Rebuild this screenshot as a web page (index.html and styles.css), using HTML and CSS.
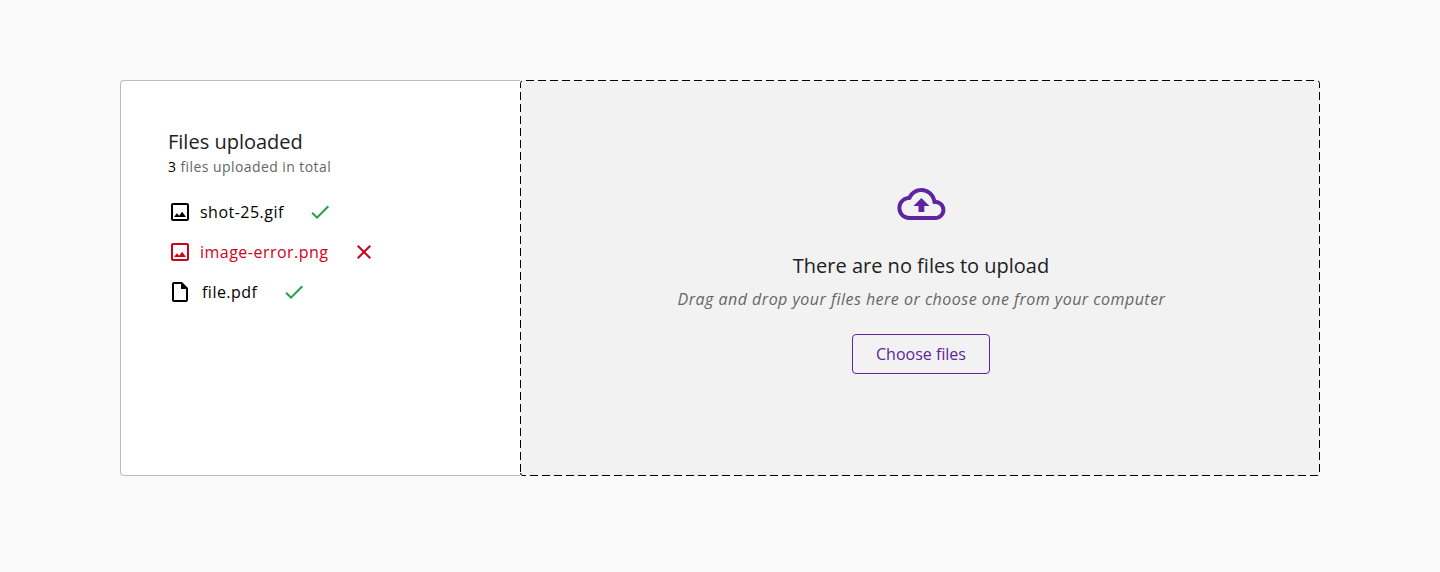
FILE: index.html
```html
<!DOCTYPE html>
<html lang="en">
<head>
<meta charset="utf-8">
<title>File upload</title>
<link rel="stylesheet" href="styles.css">
</head>
<body>
<main class="uploader">
  <section class="uploaded">
    <h2 class="title">Files uploaded</h2>
    <p class="summary"><span class="count">3</span> files uploaded in total</p>
    <ul class="files">
      <li class="file">
        <svg class="icon" viewBox="0 0 24 24"><path d="M19 5v14H5V5h14m0-2H5c-1.100 0-2 .9-2 2v14c0 1.100.9 2 2 2h14c1.100 0 2-.9 2-2V5c0-1.100-.9-2-2-2zm-4.860 8.860l-3 3.870L9 13.140 6 17h12l-3.860-5.140z"/></svg>
        <span class="name">shot-25.gif</span>
        <svg class="icon ok" viewBox="0 0 24 24"><path d="M9 16.170L4.830 12l-1.420 1.410L9 19 21 7l-1.410-1.410z"/></svg>
      </li>
      <li class="file failed">
        <svg class="icon" viewBox="0 0 24 24"><path d="M19 5v14H5V5h14m0-2H5c-1.100 0-2 .9-2 2v14c0 1.100.9 2 2 2h14c1.100 0 2-.9 2-2V5c0-1.100-.9-2-2-2zm-4.860 8.860l-3 3.870L9 13.140 6 17h12l-3.860-5.140z"/></svg>
        <span class="name">image-error.png</span>
        <svg class="icon" viewBox="0 0 24 24"><path d="M19 6.410L17.590 5 12 10.590 6.410 5 5 6.410 10.590 12 5 17.590 6.410 19 12 13.410 17.590 19 19 17.590 13.410 12z"/></svg>
      </li>
      <li class="file document">
        <svg class="icon" viewBox="0 0 24 24"><path d="M14 2H6c-1.100 0-2 .9-2 2v16c0 1.100.9 2 2 2h12c1.100 0 2-.9 2-2V8l-6-6zM6 20V4h7v5h5v11H6z"/></svg>
        <span class="name">file.pdf</span>
        <svg class="icon ok" viewBox="0 0 24 24"><path d="M9 16.170L4.830 12l-1.420 1.410L9 19 21 7l-1.410-1.410z"/></svg>
      </li>
    </ul>
  </section>
  <section class="dropzone">
    <svg class="outline" viewBox="0 0 800 396">
      <path class="dashes" d="M6 .5H798M799.500 12V392M.5 12V392M10 395.500H798"/>
      <path d="M.5 8V3.500Q.5 1.500 2 1M799.500 8V3.500Q799.500 1.500 798 1M.5 393Q.5 395.500 3 395.500H6"/>
    </svg>
    <svg class="cloud" viewBox="-.2 0 24 24"><path d="M19.350 10.040C18.670 6.590 15.640 4 12 4 9.110 4 6.600 5.640 5.350 8.040 2.340 8.360 0 10.910 0 14c0 3.310 2.690 6 6 6h13c2.760 0 5-2.240 5-5 0-2.640-2.050-4.780-4.650-4.960zM19 18H6c-2.210 0-4-1.790-4-4 0-2.050 1.530-3.760 3.560-3.970l1.070-.11.500-.95C8.080 7.140 9.940 6 12 6c2.620 0 4.880 1.860 5.390 4.430l.3 1.500 1.530.11c1.560.1 2.780 1.410 2.780 2.960 0 1.650-1.350 3-3 3zM8 13h2.550v3h2.900v-3H16l-4-4z"/></svg>
    <h2 class="title">There are no files to upload</h2>
    <p class="hint">Drag and drop your files here or choose one from your computer</p>
    <button class="choose" type="button">Choose files</button>
  </section>
</main>
</body>
</html>
```
FILE: styles.css
```css
* { box-sizing: border-box; }
body {
  margin: 0;
  padding: 80px 120px;
  background: #fafafa;
  color: #000;
  font-family: "Open Sans", sans-serif;
}
h2, p, ul { margin: 0; padding: 0; font-weight: 400; }
.uploader { display: grid; grid-template-columns: 400px 800px; height: 396px; }
.uploaded {
  padding: 47px;
  background: #fff;
  border: 1px solid #bbb;
  border-right: 0;
  border-radius: 4px 0 0 4px;
}
.title { font-size: 20px; line-height: 28px; color: #212121; }
.summary { font-size: 14px; line-height: 22px; letter-spacing: .03em; color: #666; }
.count { color: #000; }
.files { display: flex; flex-direction: column; gap: 16px; margin-top: 22px; list-style: none; }
.file { display: flex; align-items: center; gap: 8px; height: 24px; font-size: 16px; letter-spacing: .03em; }
.file .name { margin-right: 16px; }
.document .name { margin: 0 16.500px 0 2px; }
.failed { color: #d0011b; }
.icon { flex: none; width: 24px; height: 24px; fill: currentColor; }
.ok { color: #24a148; }
.dropzone {
  position: relative;
  display: flex;
  flex-direction: column;
  align-items: center;
  padding: 100px 0 0 2px;
  background: #f2f2f2;
  border-radius: 4px;
}
.outline {
  position: absolute;
  inset: 0;
  width: 800px;
  height: 396px;
  fill: none;
  stroke: #000;
}
.dashes { stroke-dasharray: 8 4; }
.cloud { width: 48px; height: 48px; margin-bottom: 24px; overflow: visible; fill: #5f249f; }
.hint { margin: 7px 0 0 1px; font-size: 16px; line-height: 24px; font-style: italic; letter-spacing: .03em; color: #666; }
.choose {
  width: 138px;
  height: 40px;
  margin-top: 23px;
  padding: 0;
  border: 1px solid #5f249f;
  border-radius: 4px;
  background: transparent;
  color: #5f249f;
  font: 16px "Open Sans", sans-serif;
}
```
